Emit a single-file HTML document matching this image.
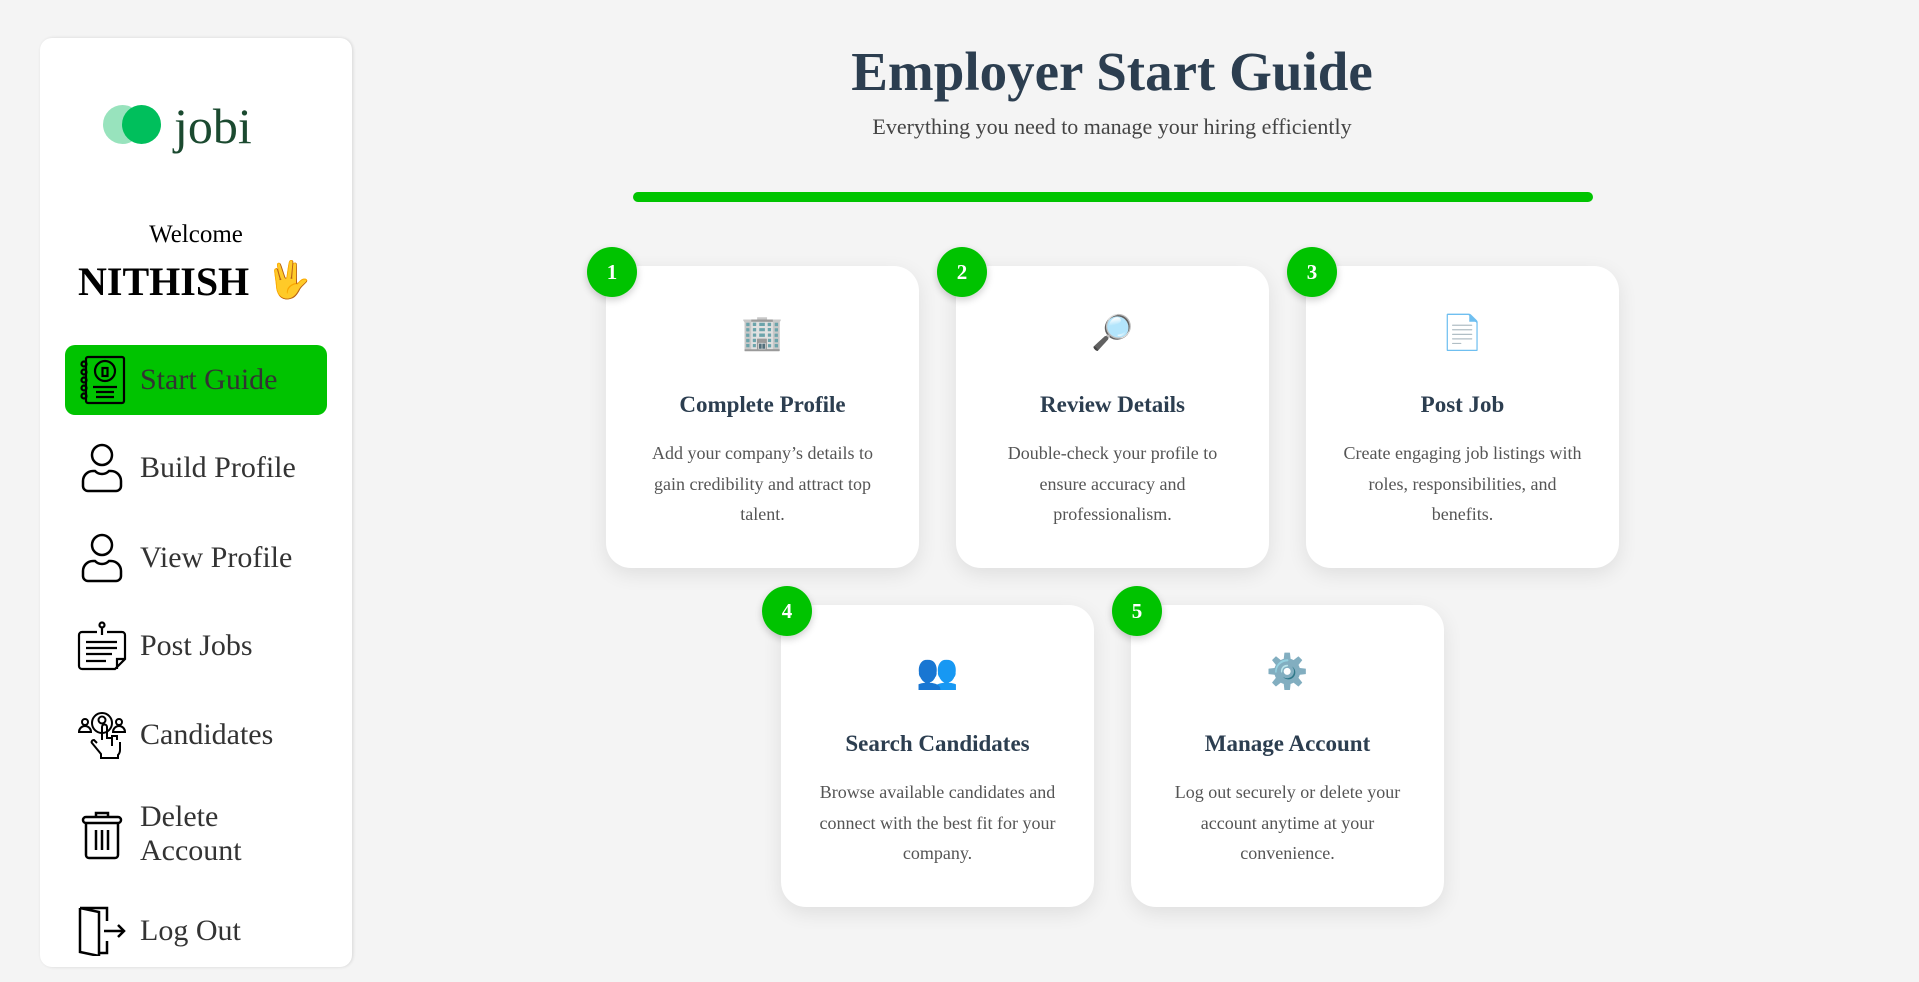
<!DOCTYPE html>
<html><head><meta charset="utf-8"><style>
*{box-sizing:border-box;margin:0;padding:0}
body{width:1919px;height:982px;background:#f4f4f4;font-family:"Liberation Serif",serif;position:relative;overflow:hidden}
.side{position:absolute;left:40px;top:38px;width:312px;height:929px;background:#fff;border-radius:12px;box-shadow:1px 0 3px rgba(0,0,0,.12)}
.c{position:absolute;border-radius:50%}
.logo{position:absolute;left:174px;top:101px;font-size:50px;color:#1b4a30;line-height:1}
.wel{position:absolute;left:40px;width:312px;text-align:center;top:221px;font-size:25px;color:#000}
.name{position:absolute;left:78px;top:258px;font-size:40px;font-weight:bold;color:#000}
.emo{position:absolute;left:266px;top:259px;font-size:36px;font-family:"Noto Color Emoji",sans-serif}
.nav{position:absolute;left:65px;width:262px;height:70px;display:flex;align-items:center;font-size:30px;color:#333}
.nav .i{width:50px;margin-left:12px;margin-right:13px;flex:none;display:flex;justify-content:center}
.nav.act{background:#00c300;border-radius:10px}
h1{position:absolute;left:612px;width:1000px;text-align:center;top:40px;font-size:55px;color:#2c3e50;font-weight:bold}
.sub{position:absolute;left:612px;width:1000px;text-align:center;top:114px;font-size:22px;color:#444}
.bar{position:absolute;left:633px;top:192px;width:960px;height:10px;background:#00c400;border-radius:5px}
.card{position:absolute;width:313px;height:302px;background:#fff;border-radius:25px;box-shadow:0 6px 20px rgba(0,0,0,.09);text-align:center}
.badge{position:absolute;left:-19px;top:-19px;width:50px;height:50px;border-radius:50%;background:#00c300;color:#fff;font-weight:bold;font-size:21px;line-height:50px;box-shadow:0 3px 8px rgba(0,0,0,.2)}
.ic{position:absolute;left:0;right:0;top:44px;font-size:34px;font-family:"Noto Color Emoji",sans-serif;line-height:46px}
.t{position:absolute;left:0;right:0;top:126px;font-size:23px;font-weight:bold;color:#2c3e50}
.d{position:absolute;left:36px;right:36px;top:172px;font-size:18px;line-height:30.5px;color:#555}
</style></head><body>
<div class="side"></div>
<div class="c" style="left:103px;top:105px;width:39px;height:39px;background:#98e3bd"></div>
<div class="c" style="left:122px;top:105px;width:39px;height:39px;background:#00bf5c"></div>
<div class="logo">jobi</div>
<div class="wel">Welcome</div>
<div class="name">NITHISH</div>
<div class="emo">🖖</div>

<div class="nav act" style="top:345px"><span class="i"><svg width="48" height="52" viewBox="0 0 48 52" fill="none" stroke="#000" stroke-width="2.2"><rect x="8" y="3" width="38" height="46" rx="2"/><circle cx="6" cy="10" r="2.5"/><circle cx="6" cy="18" r="2.5"/><circle cx="6" cy="26" r="2.5"/><circle cx="6" cy="34" r="2.5"/><circle cx="6" cy="42" r="2.5"/><circle cx="27" cy="17" r="10"/><rect x="24.5" y="14" width="5" height="8"/><path d="M15 33h24M18 38h18M18 43h18"/></svg></span>Start Guide</div>
<div class="nav" style="top:433px"><span class="i"><svg width="44" height="50" viewBox="0 0 44 50" fill="none" stroke="#000" stroke-width="2.5"><circle cx="22" cy="12" r="10"/><path d="M8 48h28a5 5 0 0 0 5-5v-5a10 10 0 0 0-10-10h-2c-4 4-10 4-14 0h-2A10 10 0 0 0 3 38v5a5 5 0 0 0 5 5z"/></svg></span>Build Profile</div>
<div class="nav" style="top:523px"><span class="i"><svg width="44" height="50" viewBox="0 0 44 50" fill="none" stroke="#000" stroke-width="2.5"><circle cx="22" cy="12" r="10"/><path d="M8 48h28a5 5 0 0 0 5-5v-5a10 10 0 0 0-10-10h-2c-4 4-10 4-14 0h-2A10 10 0 0 0 3 38v5a5 5 0 0 0 5 5z"/></svg></span>View Profile</div>
<div class="nav" style="top:611px"><span class="i"><svg width="50" height="50" viewBox="0 0 50 50" fill="none" stroke="#000" stroke-width="2.2"><circle cx="25" cy="4" r="2.5"/><path d="M25 7v7M20 11H5a3 3 0 0 0-3 3v31a3 3 0 0 0 3 3h33l10-10V14a3 3 0 0 0-3-3H30M48 38H40v10M9 21h31M9 27h31M9 33h26M9 40h20"/></svg></span>Post Jobs</div>
<div class="nav" style="top:700px"><span class="i"><svg width="50" height="50" viewBox="0 0 50 50" fill="none" stroke="#000" stroke-width="2"><circle cx="25" cy="13" r="10"/><circle cx="25" cy="10" r="3.5"/><circle cx="8" cy="12" r="3"/><circle cx="42" cy="12" r="3"/><path d="M2 22a6 6 0 0 1 12 0zM36 22a6 6 0 0 1 12 0zM25 30V17a2.5 2.5 0 0 1 5 0v11h5v8M35 28v-2h5v4M30 28h5M20 33l-3-3c-2 0-3 2-2 3l9 11v4h17v-3c1-1 2-2 2-5v-8"/></svg></span>Candidates</div>
<div class="nav" style="top:790px;height:88px;line-height:34px"><span class="i"><svg width="44" height="52" viewBox="0 0 44 52" fill="none" stroke="#000" stroke-width="2.5"><rect x="3" y="9" width="38" height="6" rx="3"/><path d="M16 9V5h12v4M6 15v32a3 3 0 0 0 3 3h26a3 3 0 0 0 3-3V15M16 22v20M22 22v20M28 22v20"/></svg></span><span>Delete<br>Account</span></div>
<div class="nav" style="top:896px"><span class="i"><svg width="50" height="50" viewBox="0 0 50 50" fill="none" stroke="#000" stroke-width="2.5"><path d="M3 2h27v13M30 35v12h-8M3 2v44l19 4V6L3 2M27 25h20M41 19l6 6-6 6"/></svg></span>Log Out</div>

<h1>Employer Start Guide</h1>
<div class="sub">Everything you need to manage your hiring efficiently</div>
<div class="bar"></div>

<div class="card" style="left:606px;top:266px"><div class="badge">1</div><div class="ic">🏢</div><div class="t">Complete Profile</div><div class="d">Add your company’s details to gain credibility and attract top talent.</div></div>
<div class="card" style="left:956px;top:266px"><div class="badge">2</div><div class="ic">🔎</div><div class="t">Review Details</div><div class="d">Double-check your profile to ensure accuracy and professionalism.</div></div>
<div class="card" style="left:1306px;top:266px"><div class="badge">3</div><div class="ic">📄</div><div class="t">Post Job</div><div class="d">Create engaging job listings with roles, responsibilities, and benefits.</div></div>
<div class="card" style="left:781px;top:605px"><div class="badge">4</div><div class="ic">👥</div><div class="t">Search Candidates</div><div class="d">Browse available candidates and connect with the best fit for your company.</div></div>
<div class="card" style="left:1131px;top:605px"><div class="badge">5</div><div class="ic">⚙️</div><div class="t">Manage Account</div><div class="d">Log out securely or delete your account anytime at your convenience.</div></div>
</body></html>
